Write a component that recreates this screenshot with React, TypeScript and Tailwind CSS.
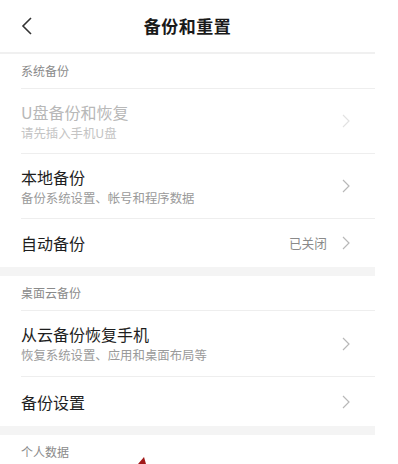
import React from "react";

const font = { fontFamily: '"Noto Sans CJK SC", "Noto Sans", sans-serif' };

function Chevron({ light = false }: { light?: boolean }) {
  return (
    <svg width="8" height="14" viewBox="0 0 8 14" className="shrink-0">
      <path d="M1 1 L7 7 L1 13" fill="none" stroke={light ? "#e2e2e2" : "#b8b8b8"} strokeWidth="1.2" />
    </svg>
  );
}

function Divider({ inset = true }: { inset?: boolean }) {
  return <div className={`h-px bg-[#eeeeee] ${inset ? "ml-[21px]" : ""}`} />;
}

function Band() {
  return <div className="h-[9px] bg-[#f4f4f4]" />;
}

function SectionTitle({ text }: { text: string }) {
  return (
    <div className="h-[34px] flex items-center pl-[21px] text-[12px] text-[#8a8a8a]">{text}</div>
  );
}

function Row({
  title,
  sub,
  disabled = false,
  value,
  h,
}: {
  title: string;
  sub?: string;
  disabled?: boolean;
  value?: string;
  h: string;
}) {
  return (
    <div className={`flex items-center pl-[21px] pr-[25px] ${h}`}>
      <div className="flex-1 flex flex-col">
        <div className={`text-[16px] leading-[20px] ${disabled ? "text-[#b8b8b8]" : "text-[#1e1e1e]"}`}>{title}</div>
        {sub && (
          <div className={`mt-[3px] text-[12.4px] leading-[16px] ${disabled ? "text-[#c4c4c4]" : "text-[#9a9a9a]"}`}>{sub}</div>
        )}
      </div>
      {value && <div className="text-[12.7px] text-[#8a8a8a] mr-[15px]">{value}</div>}
      <Chevron light={disabled} />
    </div>
  );
}

export default function App() {
  return (
    <div className="w-[398px] h-[464px] bg-white overflow-hidden relative" style={font}>
      <div className="w-[375px]">
        <div className="h-[52px] relative flex items-center justify-center">
          <svg width="12" height="18" viewBox="0 0 12 18" className="absolute left-[21px] top-[17px]">
            <path d="M10 1 L2 9 L10 17" fill="none" stroke="#333" strokeWidth="1.6" />
          </svg>
          <div className="text-[17px] font-bold text-[#1a1a1a] tracking-[0.5px]">备份和重置</div>
        </div>
        <div className="h-[2px] bg-[#f0f0f0]" />
        <SectionTitle text="系统备份" />
        <Divider />
        <Row title="U盘备份和恢复" sub="请先插入手机U盘" disabled h="h-[64px]" />
        <Divider />
        <Row title="本地备份" sub="备份系统设置、帐号和程序数据" h="h-[64px]" />
        <Divider />
        <Row title="自动备份" value="已关闭" h="h-[48px]" />
        <Band />
        <SectionTitle text="桌面云备份" />
        <Divider />
        <Row title="从云备份恢复手机" sub="恢复系统设置、应用和桌面布局等" h="h-[65px]" />
        <Divider />
        <Row title="备份设置" h="h-[49px]" />
        <Band />
        <SectionTitle text="个人数据" />
      </div>
      <svg width="12" height="8" viewBox="0 0 12 8" className="absolute left-[136px] top-[456px]">
        <path d="M2 8 L8 1 L10 8 Z" fill="#a11a1a" />
      </svg>
    </div>
  );
}
